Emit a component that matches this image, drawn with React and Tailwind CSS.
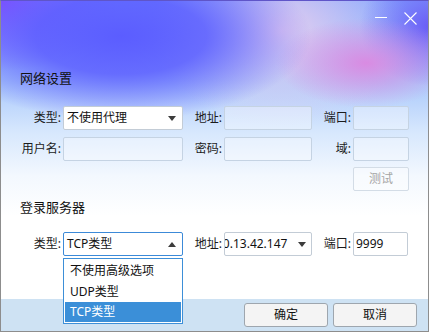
import React from "react";

const font = "font-['Noto_Sans','Noto_Sans_CJK_SC',sans-serif]";

function Caret({ up = false }) {
  return (
    <svg width="8" height="5" viewBox="0 0 8 5" className="shrink-0">
      {up ? <path d="M0 5 L4 0 L8 5 Z" fill="#3c3c3c" /> : <path d="M0 0 L8 0 L4 5 Z" fill="#3c3c3c" />}
    </svg>
  );
}

function Label({ w, children }) {
  return (
    <div className="shrink-0 text-right text-[12px] text-[#1b1b1b] pr-[2px]" style={{ width: w }}>
      {children}
    </div>
  );
}

function Field({ w, children, className = "" }) {
  return (
    <div
      className={`h-[24px] shrink-0 rounded-[2px] border border-[#c5d3e3] bg-[rgba(255,255,255,0.35)] ${className}`}
      style={{ width: w }}
    >
      {children}
    </div>
  );
}

export default function App() {
  return (
    <div
      className={`${font} relative flex h-[332px] w-[429px] flex-col overflow-hidden border border-[#8d8d8d] border-t-[#5f55c8] bg-[radial-gradient(ellipse_190px_85px_at_120px_35px,#5b5dff_0%,rgba(91,93,255,0.85)_45%,rgba(91,93,255,0)_100%),radial-gradient(ellipse_120px_70px_at_0px_0px,#8c4cff_0%,rgba(140,76,255,0)_100%),radial-gradient(ellipse_90px_45px_at_365px_62px,#d98be2_0%,rgba(217,139,226,0)_100%),radial-gradient(ellipse_70px_60px_at_429px_25px,#6a5cf6_0%,rgba(106,92,246,0)_100%),radial-gradient(ellipse_130px_95px_at_280px_30px,#e4cdef_0%,rgba(228,205,239,0)_100%),linear-gradient(180deg,#84a9ff_0px,#a9c8fb_80px,#d6e7fd_130px,#f3f8fe_175px,#ffffff_215px)]`}
    >
      {/* title bar */}
      <div className="flex h-[35px] shrink-0 items-start justify-end pr-[11px] pt-[11px]">
        <div className="mr-[17px] mt-[5px] h-px w-[12px] bg-white" />
        <svg width="13" height="13" viewBox="0 0 13 13">
          <path d="M0.5 0.5 L12.5 12.5 M12.5 0.5 L0.5 12.5" stroke="#fff" strokeWidth="1.1" />
        </svg>
      </div>

      <div className="mt-[32px] h-[20px] pl-[19px] text-[13px] leading-[20px] text-[#111]">网络设置</div>

      {/* row 1 */}
      <div className="mt-[18px] flex items-center pl-[19px]">
        <Label w={43}>类型:</Label>
        <div className="flex h-[24px] w-[120px] shrink-0 items-center justify-between rounded-[2px] border border-[#c3ccd6] bg-white pl-[3px] pr-[6px] text-[12px] text-[#111]">
          <span>不使用代理</span>
          <Caret />
        </div>
        <Label w={41}>地址:</Label>
        <Field w={88} />
        <Label w={41}>端口:</Label>
        <Field w={56} />
      </div>

      {/* row 2 */}
      <div className="mt-[7px] flex items-center pl-[19px]">
        <Label w={43}>用户名:</Label>
        <Field w={120} />
        <Label w={41}>密码:</Label>
        <Field w={88} />
        <Label w={41}>域:</Label>
        <Field w={56} />
      </div>

      {/* row 3 */}
      <div className="mt-[6px] flex pl-[352px]">
        <div className="flex h-[24px] w-[56px] items-center justify-center rounded-[2px] border border-[#d3dce6] bg-[rgba(255,255,255,0.4)] text-[12px] text-[#a5a5a5]">
          测试
        </div>
      </div>

      <div className="mt-[6px] h-[20px] pl-[19px] text-[13px] leading-[20px] text-[#111]">登录服务器</div>

      {/* row 4 */}
      <div className="relative mt-[15px] flex items-center pl-[19px]">
        <Label w={43}>类型:</Label>
        <div className="flex h-[24px] w-[120px] shrink-0 items-center justify-between rounded-[2px] border border-[#3c8ad8] bg-white pl-[3px] pr-[6px] text-[12px] text-[#111]">
          <span>TCP类型</span>
          <Caret up />
        </div>
        <Label w={41}>地址:</Label>
        <div className="flex h-[24px] w-[88px] shrink-0 items-center rounded-[2px] border border-[#c3ccd6] bg-white pr-[5px] text-[12px] text-[#111]">
          <div className="flex-1 overflow-hidden whitespace-nowrap">
            <span className="ml-[-9px] inline-block">10.13.42.147</span>
          </div>
          <Caret />
        </div>
        <Label w={41}>端口:</Label>
        <div className="flex h-[24px] w-[55px] shrink-0 items-center rounded-[2px] border border-[#c3ccd6] bg-white pl-[2px] text-[12px] text-[#111]">
          9999
        </div>

        {/* open list */}
        <div className="absolute left-[62px] top-[26px] z-10 flex w-[120px] flex-col border border-[#3d8fd8] bg-white p-px text-[12px] text-[#111]">
          <div className="h-[21px] pl-[5px] leading-[21px]">不使用高级选项</div>
          <div className="h-[21px] pl-[5px] leading-[21px]">UDP类型</div>
          <div className="h-[20px] bg-[#3b8fd8] pl-[5px] leading-[20px] text-white">TCP类型</div>
        </div>
      </div>

      {/* footer */}
      <div className="mt-auto flex h-[32px] items-center justify-end gap-[5px] bg-[#cee2f3] pr-[11px]">
        <div className="flex h-[24px] w-[84px] items-center justify-center rounded-[3px] border border-[#9ea6ae] bg-[#f4f4f4] text-[12px] text-[#111]">
          确定
        </div>
        <div className="flex h-[24px] w-[84px] items-center justify-center rounded-[3px] border border-[#9ea6ae] bg-[#f4f4f4] text-[12px] text-[#111]">
          取消
        </div>
      </div>
    </div>
  );
}
